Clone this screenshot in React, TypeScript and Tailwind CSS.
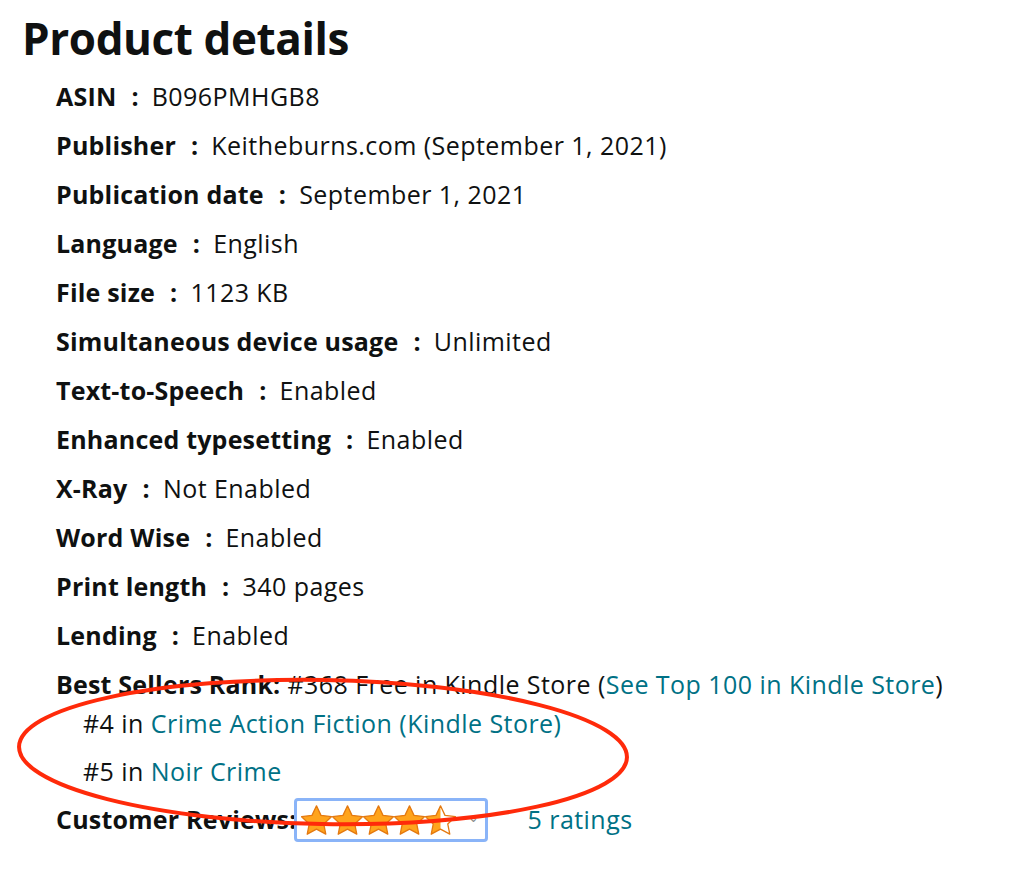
const rows: [string, string][] = [
  ["ASIN", "B096PMHGB8"],
  ["Publisher", "Keitheburns.com (September 1, 2021)"],
  ["Publication date", "September 1, 2021"],
  ["Language", "English"],
  ["File size", "1123 KB"],
  ["Simultaneous device usage", "Unlimited"],
  ["Text-to-Speech", "Enabled"],
  ["Enhanced typesetting", "Enabled"],
  ["X-Ray", "Not Enabled"],
  ["Word Wise", "Enabled"],
  ["Print length", "340 pages"],
  ["Lending", "Enabled"],
];

const STAR = "M12 1.8l3.1 6.6 7.2.9-5.3 5 1.4 7.1L12 17.9l-6.4 3.5 1.4-7.1-5.3-5 7.2-.9z";

function Star({ half }: { half?: boolean }) {
  return (
    <svg width="31" height="30" viewBox="1.3 1.3 21.4 20.6" className="block">
      <defs>
        <clipPath id="halfclip">
          <rect x="0" y="0" width="12" height="24" />
        </clipPath>
      </defs>
      {half ? (
        <>
          <path d={STAR} fill="#fff" />
          <path d={STAR} fill="#ffa41c" clipPath="url(#halfclip)" />
          <path d={STAR} fill="none" stroke="#e47911" strokeWidth="0.9" strokeLinejoin="round" />
        </>
      ) : (
        <path d={STAR} fill="#ffa41c" stroke="#e47911" strokeWidth="0.9" strokeLinejoin="round" />
      )}
    </svg>
  );
}

export default function App() {
  return (
    <div
      className="relative w-[1023px] h-[877px] bg-white text-[#0f1111] overflow-hidden"
      style={{ fontFamily: '"Open Sans", "Noto Sans", Arial, sans-serif' }}
    >
      <h1 className="pl-[22px] pt-[12px] text-[44px] leading-[52px] font-bold tracking-[-0.4px]">
        Product details
      </h1>
      <ul className="pl-[56px] pt-[8px] text-[25px] tracking-[0.45px]">
        {rows.map(([k, v]) => (
          <li key={k} className="h-[49px] leading-[49px] whitespace-nowrap">
            <span className="font-bold tracking-[0.2px]">
              {k}
              <span className="ml-[15px] mr-[13px]">:</span>
            </span>
            {v}
          </li>
        ))}
        <li className="whitespace-nowrap">
          <div className="h-[49px] leading-[49px]">
            <span className="font-bold tracking-[0.2px]">Best Sellers Rank:</span> #368 Free in Kindle Store (
            <span className="text-[#007185]">See Top 100 in Kindle Store</span>)
          </div>
          <ul className="pl-[27px]">
            <li className="h-[38px] leading-[28px] -mt-[10px] pt-[10px] box-content">
              #4 in <span className="text-[#007185]">Crime Action Fiction (Kindle Store)</span>
            </li>
            <li className="h-[48px] leading-[48px]">
              #5 in <span className="text-[#007185]">Noir Crime</span>
            </li>
          </ul>
        </li>
        <li className="flex items-center h-[50px] whitespace-nowrap">
          <span className="font-bold tracking-[0.2px]">Customer Reviews:</span>
          <div className="-ml-[3px] flex items-center w-[194px] h-[44px] border-[3px] border-[#8ab4f8] rounded-[4px] pl-[4px]">
            <Star />
            <Star />
            <Star />
            <Star />
            <Star half />
            <span className="ml-auto mr-[5px] -mt-[6px] text-[#888] text-[13px] leading-none">⌄</span>
          </div>
          <span className="ml-[40px] text-[#007185]">5 ratings</span>
        </li>
      </ul>
      <svg className="absolute left-0 top-0 pointer-events-none" width="1023" height="877">
        <ellipse
          cx="323"
          cy="752"
          rx="304"
          ry="72"
          transform="rotate(1 323 752)"
          fill="none"
          stroke="#ff2a0a"
          strokeWidth="4"
        />
      </svg>
    </div>
  );
}
